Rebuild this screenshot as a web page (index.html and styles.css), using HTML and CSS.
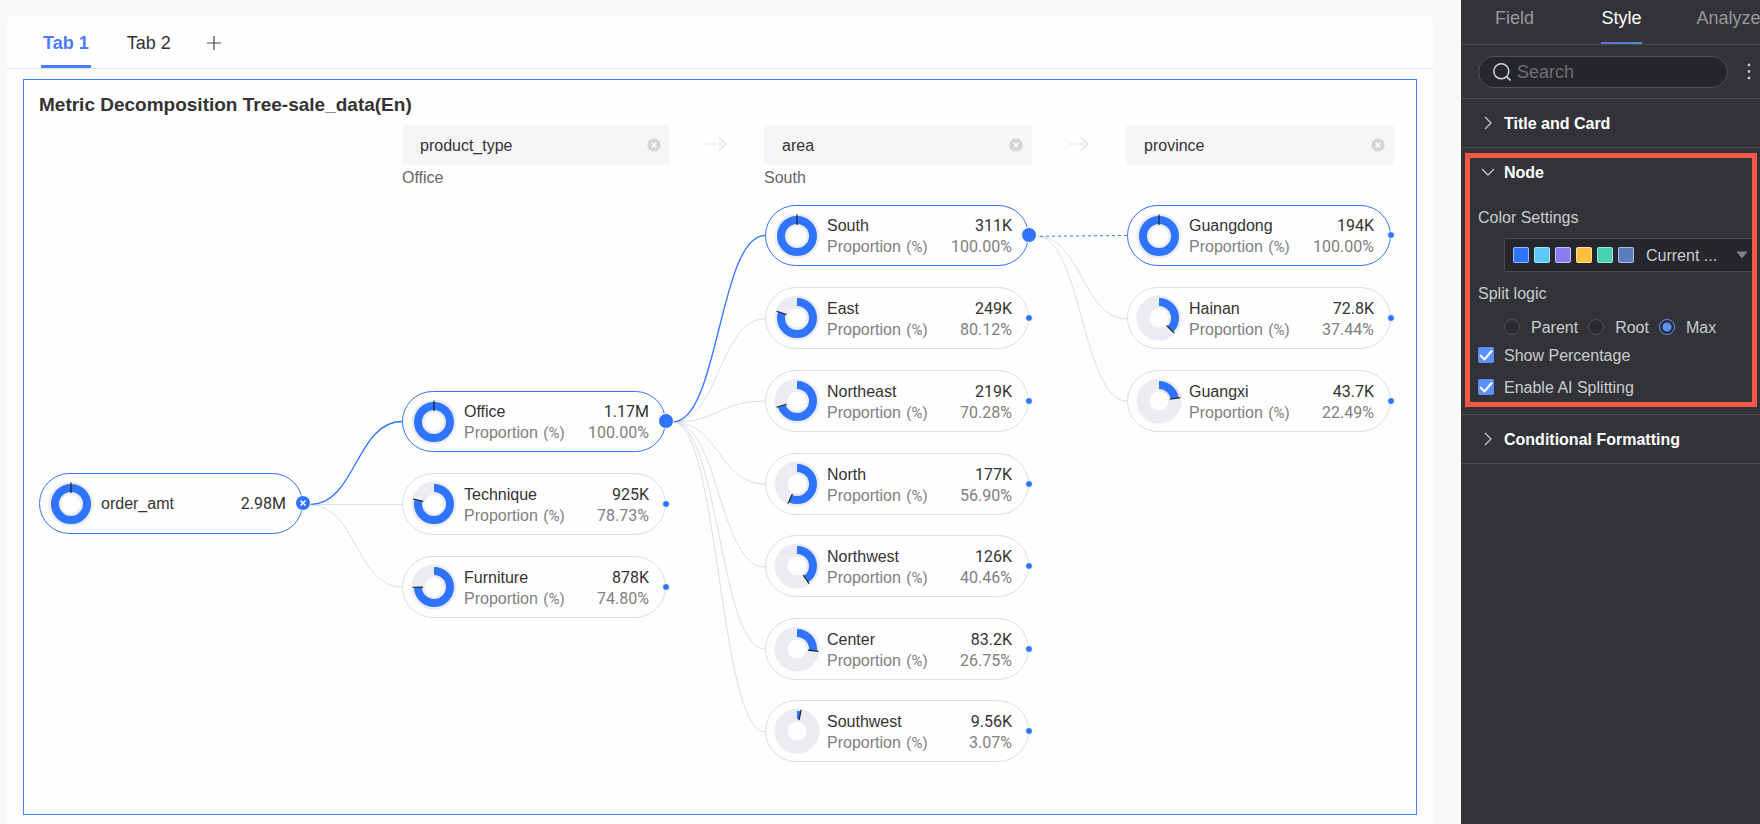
FILE: index.html
```html
<!DOCTYPE html>
<html lang="en">
<head>
<meta charset="utf-8">
<title>Metric Decomposition Tree</title>
<link rel="stylesheet" href="styles.css">
</head>
<body>
<svg class="defs" aria-hidden="true">
  <symbol id="clear" viewBox="0 0 14 14"><circle cx="7" cy="7" r="6.6" fill="#d5d5d7"/><path d="M4.8 4.8l4.4 4.4M9.2 4.8l-4.4 4.4" stroke="#fff" stroke-width="1.5"/></symbol>
  <symbol id="arrow" viewBox="0 0 20 14"><path d="M0 7h4M5.500 7h4M11 7h4" stroke="#dfe0e8" stroke-width="1"/><path d="M12 0.500L19 7l-7 6.500" fill="none" stroke="#dfe0e8" stroke-width="1.300"/></symbol>
  <symbol id="chevron" viewBox="0 0 14 14"><path d="M4 1l6 6-6 6" fill="none" stroke="#c4c5c9" stroke-width="1.300"/></symbol>
  <symbol id="chevron-down" viewBox="0 0 14 14"><path d="M1 4l6 6 6-6" fill="none" stroke="#c4c5c9" stroke-width="1.300"/></symbol>
</svg>
<div class="app">
  <main class="main">
    <div class="board">
      <nav class="tabs">
        <button class="tab tab-active">Tab 1</button>
        <button class="tab">Tab 2</button>
        <button class="tab-add" aria-label="Add tab"><svg width="14" height="14" viewBox="0 0 14 14"><path d="M7 0v14M0 7h14" stroke="#444" stroke-width="1.200"/></svg></button>
      </nav>
      <section class="card">
        <h1 class="card-title">Metric Decomposition Tree-sale_data(En)</h1>
        <div class="levels">
          <div class="level">
            <div class="level-box">product_type<button class="level-clear" aria-label="Remove product_type"><svg width="14" height="14"><use href="#clear"/></svg></button></div>
            <div class="level-value">Office</div>
          </div>
          <svg class="level-arrow" width="20" height="14"><use href="#arrow"/></svg>
          <div class="level">
            <div class="level-box">area<button class="level-clear" aria-label="Remove area"><svg width="14" height="14"><use href="#clear"/></svg></button></div>
            <div class="level-value">South</div>
          </div>
          <svg class="level-arrow" width="20" height="14"><use href="#arrow"/></svg>
          <div class="level">
            <div class="level-box">province<button class="level-clear" aria-label="Remove province"><svg width="14" height="14"><use href="#clear"/></svg></button></div>
          </div>
        </div>
        <div class="tree">
          <svg class="links" width="1363" height="625" viewBox="0 0 1363 625">
            <g class="link">
              <path d="M271 315.500H363"/>
              <path d="M271 315.500C317 315.500 317 398 363 398"/>
              <path d="M634 233C680 233 680 130 726 130"/>
              <path d="M634 233C680 233 680 212 726 212"/>
              <path d="M634 233C680 233 680 295 726 295"/>
              <path d="M634 233C680 233 680 378 726 378"/>
              <path d="M634 233C680 233 680 460 726 460"/>
              <path d="M634 233C680 233 680 543 726 543"/>
              <path d="M997 47C1043 47 1043 130 1088 130"/>
              <path d="M997 47C1043 47 1043 212 1088 212"/>
            </g>
            <g class="link link-active">
              <path d="M271 315.500C317 315.500 317 232.500 363 232.500"/>
              <path d="M634 233C680 233 680 46.500 726 46.500"/>
              <path class="link-dashed" d="M1001 47.300L1088 46.500"/>
            </g>
          </svg>

          <div class="node node-active" style="left:0px;top:284px">
            <svg class="donut" viewBox="-23 -23 46 46"><circle class="track" r="16"/><circle class="full" r="16"/><path class="hand" d="M0-21.500V-11"/></svg>
            <div class="info"><div class="row"><span>order_amt</span><span class="num">2.98M</span></div></div>
            <span class="dot dot-open"><svg width="6" height="6" viewBox="0 0 6 6"><path d="M0.500 0.500l5 5M5.500 0.500l-5 5" stroke="#fff" stroke-width="1.500"/></svg></span>
          </div>

          <div class="node node-active" style="left:363px;top:202px">
            <svg class="donut" viewBox="-23 -23 46 46"><circle class="track" r="16"/><circle class="full" r="16"/><path class="hand" d="M0-21.500V-11"/></svg>
            <div class="info"><div class="row"><span>Office</span><span class="num">1.17M</span></div><div class="row sub"><span>Proportion <small>(%)</small></span><span class="num">100.00%</span></div></div>
            <span class="dot dot-open"></span>
          </div>
          <div class="node" style="left:363px;top:284px">
            <svg class="donut" viewBox="-23 -23 46 46"><circle class="track" r="16"/><circle class="arc" r="16" pathLength="100" stroke-dasharray="78.730 100" transform="rotate(-90)"/><path class="hand" d="M0-21.500V-11" transform="rotate(283.400)"/></svg>
            <div class="info"><div class="row"><span>Technique</span><span class="num">925K</span></div><div class="row sub"><span>Proportion <small>(%)</small></span><span class="num">78.73%</span></div></div>
            <span class="dot"></span>
          </div>
          <div class="node" style="left:363px;top:367px">
            <svg class="donut" viewBox="-23 -23 46 46"><circle class="track" r="16"/><circle class="arc" r="16" pathLength="100" stroke-dasharray="74.800 100" transform="rotate(-90)"/><path class="hand" d="M0-21.500V-11" transform="rotate(269.300)"/></svg>
            <div class="info"><div class="row"><span>Furniture</span><span class="num">878K</span></div><div class="row sub"><span>Proportion <small>(%)</small></span><span class="num">74.80%</span></div></div>
            <span class="dot"></span>
          </div>

          <div class="node node-active" style="left:726px;top:16px">
            <svg class="donut" viewBox="-23 -23 46 46"><circle class="track" r="16"/><circle class="full" r="16"/><path class="hand" d="M0-21.500V-11"/></svg>
            <div class="info"><div class="row"><span>South</span><span class="num">311K</span></div><div class="row sub"><span>Proportion <small>(%)</small></span><span class="num">100.00%</span></div></div>
            <span class="dot dot-open"></span>
          </div>
          <div class="node" style="left:726px;top:98px">
            <svg class="donut" viewBox="-23 -23 46 46"><circle class="track" r="16"/><circle class="arc" r="16" pathLength="100" stroke-dasharray="80.120 100" transform="rotate(-90)"/><path class="hand" d="M0-21.500V-11" transform="rotate(288.400)"/></svg>
            <div class="info"><div class="row"><span>East</span><span class="num">249K</span></div><div class="row sub"><span>Proportion <small>(%)</small></span><span class="num">80.12%</span></div></div>
            <span class="dot"></span>
          </div>
          <div class="node" style="left:726px;top:181px">
            <svg class="donut" viewBox="-23 -23 46 46"><circle class="track" r="16"/><circle class="arc" r="16" pathLength="100" stroke-dasharray="70.280 100" transform="rotate(-90)"/><path class="hand" d="M0-21.500V-11" transform="rotate(253)"/></svg>
            <div class="info"><div class="row"><span>Northeast</span><span class="num">219K</span></div><div class="row sub"><span>Proportion <small>(%)</small></span><span class="num">70.28%</span></div></div>
            <span class="dot"></span>
          </div>
          <div class="node" style="left:726px;top:264px">
            <svg class="donut" viewBox="-23 -23 46 46"><circle class="track" r="16"/><circle class="arc" r="16" pathLength="100" stroke-dasharray="56.900 100" transform="rotate(-90)"/><path class="hand" d="M0-21.500V-11" transform="rotate(204.800)"/></svg>
            <div class="info"><div class="row"><span>North</span><span class="num">177K</span></div><div class="row sub"><span>Proportion <small>(%)</small></span><span class="num">56.90%</span></div></div>
            <span class="dot"></span>
          </div>
          <div class="node" style="left:726px;top:346px">
            <svg class="donut" viewBox="-23 -23 46 46"><circle class="track" r="16"/><circle class="arc" r="16" pathLength="100" stroke-dasharray="40.460 100" transform="rotate(-90)"/><path class="hand" d="M0-21.500V-11" transform="rotate(145.600)"/></svg>
            <div class="info"><div class="row"><span>Northwest</span><span class="num">126K</span></div><div class="row sub"><span>Proportion <small>(%)</small></span><span class="num">40.46%</span></div></div>
            <span class="dot"></span>
          </div>
          <div class="node" style="left:726px;top:429px">
            <svg class="donut" viewBox="-23 -23 46 46"><circle class="track" r="16"/><circle class="arc" r="16" pathLength="100" stroke-dasharray="26.750 100" transform="rotate(-90)"/><path class="hand" d="M0-21.500V-11" transform="rotate(96.300)"/></svg>
            <div class="info"><div class="row"><span>Center</span><span class="num">83.2K</span></div><div class="row sub"><span>Proportion <small>(%)</small></span><span class="num">26.75%</span></div></div>
            <span class="dot"></span>
          </div>
          <div class="node" style="left:726px;top:511px">
            <svg class="donut" viewBox="-23 -23 46 46"><circle class="track" r="16"/><circle class="arc" r="16" pathLength="100" stroke-dasharray="3.070 100" transform="rotate(-90)"/><path class="hand" d="M0-21.500V-11" transform="rotate(11)"/></svg>
            <div class="info"><div class="row"><span>Southwest</span><span class="num">9.56K</span></div><div class="row sub"><span>Proportion <small>(%)</small></span><span class="num">3.07%</span></div></div>
            <span class="dot"></span>
          </div>

          <div class="node node-active" style="left:1088px;top:16px">
            <svg class="donut" viewBox="-23 -23 46 46"><circle class="track" r="16"/><circle class="full" r="16"/><path class="hand" d="M0-21.500V-11"/></svg>
            <div class="info"><div class="row"><span>Guangdong</span><span class="num">194K</span></div><div class="row sub"><span>Proportion <small>(%)</small></span><span class="num">100.00%</span></div></div>
            <span class="dot"></span>
          </div>
          <div class="node" style="left:1088px;top:98px">
            <svg class="donut" viewBox="-23 -23 46 46"><circle class="track" r="16"/><circle class="arc" r="16" pathLength="100" stroke-dasharray="37.440 100" transform="rotate(-90)"/><path class="hand" d="M0-21.500V-11" transform="rotate(134.800)"/></svg>
            <div class="info"><div class="row"><span>Hainan</span><span class="num">72.8K</span></div><div class="row sub"><span>Proportion <small>(%)</small></span><span class="num">37.44%</span></div></div>
            <span class="dot"></span>
          </div>
          <div class="node" style="left:1088px;top:181px">
            <svg class="donut" viewBox="-23 -23 46 46"><circle class="track" r="16"/><circle class="arc" r="16" pathLength="100" stroke-dasharray="22.490 100" transform="rotate(-90)"/><path class="hand" d="M0-21.500V-11" transform="rotate(81)"/></svg>
            <div class="info"><div class="row"><span>Guangxi</span><span class="num">43.7K</span></div><div class="row sub"><span>Proportion <small>(%)</small></span><span class="num">22.49%</span></div></div>
            <span class="dot"></span>
          </div>
        </div>
      </section>
    </div>
  </main>

  <aside class="side">
    <nav class="side-tabs">
      <button class="side-tab">Field</button>
      <button class="side-tab side-tab-active">Style</button>
      <button class="side-tab">Analyze</button>
    </nav>
    <div class="search-row">
      <label class="search">
        <svg width="18" height="18" viewBox="0 0 18 18"><circle cx="8.300" cy="8.300" r="7.500" fill="none" stroke="#d4d5d8" stroke-width="1.500"/><path d="M13.500 13.500l4 4" stroke="#d4d5d8" stroke-width="1.600"/></svg>
        <input class="search-input" type="text" placeholder="Search" aria-label="Search">
      </label>
      <button class="more" aria-label="More"><svg width="4" height="17" viewBox="0 0 4 17"><circle cx="2" cy="2" r="1.400"/><circle cx="2" cy="8.500" r="1.400"/><circle cx="2" cy="15" r="1.400"/></svg></button>
    </div>
    <section class="group">
      <button class="group-head"><svg width="14" height="14"><use href="#chevron"/></svg>Title and Card</button>
    </section>
    <section class="group group-marked">
      <button class="group-head"><svg width="14" height="14"><use href="#chevron-down"/></svg>Node</button>
      <div class="fields">
        <label class="field-label" for="palette">Color Settings</label>
        <div class="palette">
          <span class="swatch blue"></span><span class="swatch sky"></span><span class="swatch violet"></span><span class="swatch amber"></span><span class="swatch teal"></span><span class="swatch slate"></span>
          <select class="palette-select" id="palette"><option>Current ...</option></select>
          <svg class="caret" width="12" height="8" viewBox="0 0 12 8"><path d="M0.500 0.500h11L6 7.500z" fill="#7c8194"/></svg>
        </div>
        <div class="field-label" id="split">Split logic</div>
        <div class="radios" role="radiogroup" aria-labelledby="split">
          <label class="choice"><input class="radio" type="radio" name="split">Parent</label>
          <label class="choice"><input class="radio" type="radio" name="split">Root</label>
          <label class="choice"><input class="radio" type="radio" name="split" checked>Max</label>
        </div>
        <label class="check-row"><span class="check"><input class="checkbox" type="checkbox" checked><svg class="tick" width="16" height="16" viewBox="0 0 16 16"><path d="M2 8l4.500 4.500L14 3.500"/></svg></span>Show Percentage</label>
        <label class="check-row"><span class="check"><input class="checkbox" type="checkbox" checked><svg class="tick" width="16" height="16" viewBox="0 0 16 16"><path d="M2 8l4.500 4.500L14 3.500"/></svg></span>Enable AI Splitting</label>
      </div>
    </section>
    <section class="group">
      <button class="group-head"><svg width="14" height="14"><use href="#chevron"/></svg>Conditional Formatting</button>
    </section>
  </aside>
</div>
</body>
</html>
```
FILE: styles.css
```css
* { box-sizing: border-box; }
body { margin: 0; font: 16px/21px "Liberation Sans", Arial, sans-serif; color: #333; background: #f9f9fa; }
button { margin: 0; padding: 0; border: 0; background: none; font: inherit; color: inherit; }
svg { display: block; flex: none; }
.defs { position: absolute; width: 0; height: 0; }
.app { display: flex; min-height: 100vh; }

.main { flex: 1; min-width: 0; display: flex; padding: 17px 28px 0 7px; }
.board { flex: 1; min-width: 0; background: #fefefe; padding-bottom: 9px; }
.tabs { display: flex; align-items: stretch; gap: 34px; height: 52px; padding-left: 34px; border-bottom: 1px solid #e2e2e4; }
.tab { padding: 4px 2px 0; font-size: 18px; border-bottom: 3px solid transparent; }
.tab-active { color: #4b7cff; font-weight: bold; border-color: #4b7cff; }
.tab-add { display: flex; align-items: center; }

.card { margin: 10px 16px 0; padding: 0 15px; border: 1px solid #3f83f8; overflow: hidden; }
.card-title { margin: 0; padding: 13px 0 8px; font-size: 19px; line-height: 24px; font-weight: bold; white-space: nowrap; }
.levels { display: flex; padding-left: 363px; height: 64px; }
.level { flex: none; width: 268px; }
.level-box { display: flex; align-items: center; justify-content: space-between; height: 40px; padding: 0 9px 0 18px; background: #f6f6f8; }
.level-value { line-height: 26px; color: #666; }
.level-arrow { margin: 12px 37px 0; }

.tree { position: relative; height: 625px; }
.links { position: absolute; left: 0; top: 0; }
.link { fill: none; stroke: #dddee8; stroke-width: 1; }
.link-active { stroke: #2f74ff; stroke-width: 1.3; }
.link-dashed { stroke-width: 1; stroke-dasharray: 3 3; }
.node { position: absolute; display: flex; align-items: center; width: 264px; height: 62px; padding: 0 16px 0 8px; border: 1px solid #dddee8; border-radius: 31px; background: #fefefe; }
.node-active { height: 61px; border-color: #2f74ff; }
.donut { width: 46px; height: 46px; margin-right: 7px; }
.donut circle { fill: none; }
.track { stroke: #ebecf2; stroke-width: 13; }
.full, .arc { stroke: #2f74ff; stroke-width: 8; }
.hand { stroke: #222; stroke-width: 1.2; }
.info { flex: 1; padding-top: 2px; }
.node-active .info { padding-top: 0; }
.row { display: flex; justify-content: space-between; white-space: nowrap; }
.sub { color: #808080; }
.num { font-family: Roboto, sans-serif; }
.sub small { margin-left: 1px; font: 15px/16px Roboto, sans-serif; }
.dot { position: absolute; right: -5px; top: 26px; width: 8px; height: 8px; border: 1px solid #fefefe; border-radius: 50%; background: #2f74ff; }
.node-active .dot { top: 25px; }
.node-active .dot-open { display: flex; align-items: center; justify-content: center; right: -9px; top: 21px; width: 16px; height: 16px; }

.side { flex: none; width: 299px; overflow: hidden; background: #323338; color: #cbccce; }
.side-tabs { display: grid; grid-template-columns: repeat(3, 107px); justify-items: center; height: 45px; border-bottom: 1px solid #48494d; }
.side-tab { padding-bottom: 5px; font-size: 18px; color: #97989b; border-bottom: 2px solid transparent; }
.side-tab-active { color: #fff; border-image: linear-gradient(90deg, #6a68d8, #4b8bd8) 1; }
.search-row { display: flex; align-items: center; gap: 19px; height: 54px; padding: 0 9px 0 17px; border-bottom: 1px solid #48494d; }
.search { flex: 1; min-width: 0; display: flex; align-items: center; gap: 6px; height: 32px; padding: 0 14px; border: 1px solid #515256; border-radius: 16px; background: #26272c; }
.search-input { flex: 1; min-width: 0; padding: 0; border: 0; outline: 0; background: none; font: 18px/24px "Liberation Sans", Arial, sans-serif; color: #cbccce; }
.search-input::placeholder { color: #6e6f73; opacity: 1; }
.more { fill: #c4c5c9; }

.group { position: relative; border-bottom: 1px solid #48494d; }
.group-head { display: flex; align-items: center; gap: 9px; width: 100%; height: 48px; padding-left: 20px; font-weight: bold; color: #fff; text-align: left; }
.group-marked::after { content: ""; position: absolute; inset: 5px 3px 7px 4px; border: 5px solid #ff5647; pointer-events: none; }
.fields { display: flex; flex-direction: column; padding: 10px 4px 15px 17px; }
.field-label { line-height: 24px; }
.palette { display: flex; align-items: center; gap: 5px; height: 34px; margin: 8px 0 10px 26px; padding: 0 7px 0 8px; border: 1px solid #48494d; border-radius: 2px; background: #26272c; }
.swatch { flex: none; width: 16px; height: 16px; border: 1px solid rgba(255, 255, 255, 0.5); border-radius: 2px; }
.blue { background: #2f74ff; }
.sky { background: #5bc8f8; }
.violet { background: #8b7df0; }
.amber { background: #ffbe3d; }
.teal { background: #45d1b5; }
.slate { background: #5b7dbd; }
.palette-select { flex: 1; min-width: 0; margin-left: 7px; padding: 0; appearance: none; border: 0; outline: 0; background: none; font: inherit; color: inherit; }
.radios { display: flex; gap: 10px; margin: 9px 0 4px 26px; }
.choice { display: flex; align-items: center; gap: 11px; height: 24px; }
.radio { appearance: none; width: 16px; height: 16px; margin: 0; border: 1px solid #515256; border-radius: 50%; background: #2b2c31; }
.radio:checked { border-color: #5a90ff; background: radial-gradient(circle, #5a90ff 4px, #2b2c31 5px); }
.check-row { display: flex; align-items: center; gap: 10px; height: 24px; }
.check-row + .check-row { margin-top: 8px; }
.check { display: grid; }
.checkbox { grid-area: 1 / 1; appearance: none; width: 16px; height: 16px; margin: 0; border-radius: 2px; background: #5a90ff; }
.tick { grid-area: 1 / 1; fill: none; stroke: #fff; stroke-width: 2; pointer-events: none; }
```
